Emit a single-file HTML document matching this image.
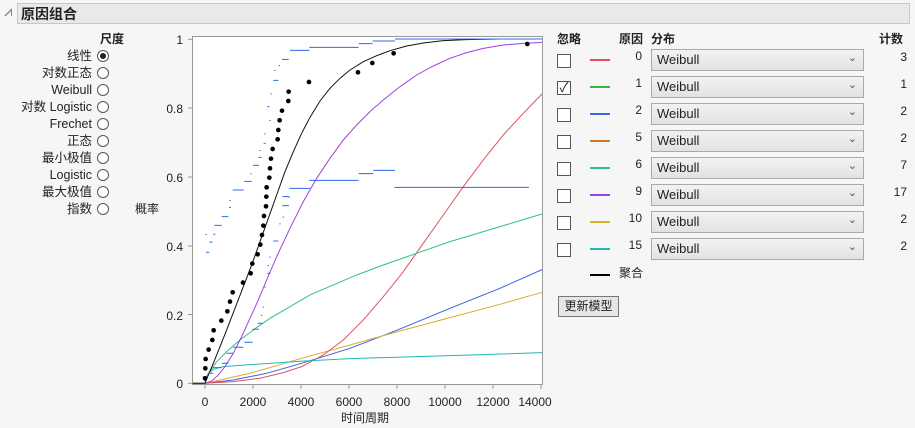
<!DOCTYPE html>
<html><head><meta charset="utf-8"><style>
*{margin:0;padding:0;box-sizing:border-box}
body{width:915px;height:428px;background:#f6f6f6;font-family:"Liberation Sans","Noto Sans CJK SC",sans-serif;font-size:12px;line-height:14px;color:#222;position:relative;overflow:hidden}
.a{position:absolute;white-space:nowrap}
.hdr{left:17px;top:3px;width:893px;height:21px;background:#e9e9e9;border:1px solid #c8c8c8}
.lbl{right:823px;text-align:right;font-size:12.5px;line-height:14px}
.rad{width:12px;height:12px;border:1px solid #555;border-radius:50%;background:#fff;left:97px}
.cb{width:14px;height:14px;border:1px solid #555;background:#fff;left:557px}
.ln{left:590px;width:20px;height:2px}
.num{right:273px;text-align:right}
.dd{left:651px;width:213px;height:22px;border:1px solid #aaa;background:linear-gradient(#f2f2f2,#e2e2e2);font-size:13px;line-height:16px;padding:2px 0 0 5px}
.dd:after{content:"⌄";position:absolute;right:6px;top:0px;font-size:11px;color:#555}
.cnt{right:8px;text-align:right}
</style></head><body>
<div class="a" style="left:4px;top:8px;width:0;height:0;border-left:8px solid transparent;border-bottom:8px solid #888"></div>
<div class="a" style="left:6px;top:11px;width:0;height:0;border-left:5px solid transparent;border-bottom:5px solid #f6f6f6"></div>
<div class="a hdr"></div>
<div class="a" style="left:21px;top:6px;font-size:14px;line-height:17px;font-weight:bold">原因组合</div>
<div class="a" style="left:100px;top:32px;font-weight:bold">尺度</div>
<div class="a lbl" style="top:49px">线性</div><div class="a rad" style="top:50px"><div style="width:6px;height:6px;border-radius:50%;background:#222;margin:2px"></div></div>
<div class="a lbl" style="top:66px">对数正态</div><div class="a rad" style="top:67px"></div>
<div class="a lbl" style="top:83px">Weibull</div><div class="a rad" style="top:84px"></div>
<div class="a lbl" style="top:100px">对数 Logistic</div><div class="a rad" style="top:101px"></div>
<div class="a lbl" style="top:117px">Frechet</div><div class="a rad" style="top:118px"></div>
<div class="a lbl" style="top:134px">正态</div><div class="a rad" style="top:135px"></div>
<div class="a lbl" style="top:151px">最小极值</div><div class="a rad" style="top:152px"></div>
<div class="a lbl" style="top:168px">Logistic</div><div class="a rad" style="top:169px"></div>
<div class="a lbl" style="top:185px">最大极值</div><div class="a rad" style="top:186px"></div>
<div class="a lbl" style="top:202px">指数</div><div class="a rad" style="top:203px"></div>
<div class="a" style="left:135px;top:202px">概率</div>
<svg class="a" style="left:0;top:0" width="915" height="428">
<rect x="192.5" y="36.5" width="350" height="348" fill="#fff" stroke="#999"/>
<g font-size="12" fill="#222" text-anchor="end" font-family="Liberation Sans,sans-serif">
<text x="183" y="44">1</text><text x="183" y="113">0.8</text><text x="183" y="182">0.6</text><text x="183" y="251">0.4</text><text x="183" y="320">0.2</text><text x="183" y="388">0</text></g>
<g stroke="#999"><line x1="188" y1="39.3" x2="192" y2="39.3"/><line x1="188" y1="108" x2="192" y2="108"/><line x1="188" y1="177" x2="192" y2="177"/><line x1="188" y1="246" x2="192" y2="246"/><line x1="188" y1="314.5" x2="192" y2="314.5"/><line x1="188" y1="383.3" x2="192" y2="383.3"/>
<line x1="205" y1="385" x2="205" y2="389"/><line x1="253" y1="385" x2="253" y2="389"/><line x1="301" y1="385" x2="301" y2="389"/><line x1="349" y1="385" x2="349" y2="389"/><line x1="397" y1="385" x2="397" y2="389"/><line x1="445" y1="385" x2="445" y2="389"/><line x1="493" y1="385" x2="493" y2="389"/><line x1="541" y1="385" x2="541" y2="389"/></g>
<g font-size="12" fill="#222" text-anchor="middle" font-family="Liberation Sans,sans-serif">
<text x="205" y="406">0</text><text x="253" y="406">2000</text><text x="301" y="406">4000</text><text x="349" y="406">6000</text><text x="397" y="406">8000</text><text x="445" y="406">10000</text><text x="493" y="406">12000</text><text x="535" y="406">14000</text></g>
<text x="365" y="422" font-size="12" text-anchor="middle" fill="#222" font-family="Liberation Sans,Noto Sans CJK SC,sans-serif">时间周期</text>
<g transform="translate(150,20) scale(0.3333)" fill="none" stroke-width="3">
<polyline stroke="#3a5fe0" points="128,1090 165,1090 250,1080 350,1060 455,1030 600,985 743,930 900,865 1050,805 1176,749"/>
<polyline stroke="#d4ae2a" points="128,1090 165,1090 300,1060 455,1015 600,975 743,935 900,893 1050,853 1176,817"/>
<polyline stroke="#e05060" points="165,1090 250,1085 330,1075 400,1058 455,1040 520,1005 580,960 640,900 700,830 760,755 820,670 880,585 940,500 1000,420 1060,345 1120,280 1176,222"/>
<polyline stroke="#2cc08c" points="165,1085 180,1055 200,1025 230,995 270,960 310,930 360,895 420,860 480,825 550,795 620,765 700,735 800,700 900,665 1000,635 1100,605 1176,582"/>
<polyline stroke="#20b8b8" points="165,1080 175,1060 190,1048 220,1040 300,1034 450,1024 600,1016 800,1010 1000,1004 1176,998"/>
<polyline stroke="#a040e0" points="165,1090 185,1083 205,1065 225,1040 250,1000 275,950 300,895 325,840 350,780 380,710 420,625 460,545 500,475 540,415 580,360 620,315 660,275 700,240 750,200 800,165 850,138 900,115 950,98 1000,85 1060,75 1120,70 1176,67"/>
<polyline stroke="#111" points="128,1090 165,1090 175,1065 190,1030 210,980 230,930 255,865 280,800 305,735 330,665 355,595 380,525 405,455 430,395 455,340 480,292 510,243 540,205 570,175 600,150 640,125 680,107 720,92 770,78 820,69 880,62 950,59 1050,57 1176,57"/>
<g stroke="#2d6be8">
<path d="M168 697h10M178 666h10M190 643h6M193 616h22M215 590h20M237 562h6M248 510h33M283 484h22M309 436h18M325 412h10M341 370h6M352 260h6M370 181h15M396 118h20M420 91h58M478 82h148M626 71h42M668 63h67M735 57h441M418 505h62M478 481h148M626 461h44M670 451h65M733 502h404M397 557h20M397 530h20M370 663h15M352 760h10M175 1060h15M190 1043h25M215 1030h20M230 1000h20M250 982h30M283 967h25M307 928h20M323 910h15"/>
<path d="M168 642v3M240 540v3M303 460v3M330 390v3M345 340v3M360 300v3M363 220v3M375 150v3M388 135v3M390 610v3M400 590v3M418 530v3M360 710v3M355 735v3M345 800v3M340 860v3M335 885v3" stroke-width="4"/>
</g>
<g fill="#000" stroke="none">
<circle cx="165" cy="1075" r="7"/><circle cx="166" cy="1045" r="7"/><circle cx="167" cy="1017" r="7"/><circle cx="176" cy="989" r="7"/><circle cx="187" cy="960" r="7"/><circle cx="191" cy="931" r="7"/><circle cx="214" cy="902" r="7"/><circle cx="232" cy="874" r="7"/><circle cx="240" cy="845" r="7"/><circle cx="248" cy="817" r="7"/><circle cx="279" cy="788" r="7"/><circle cx="302" cy="760" r="7"/><circle cx="307" cy="731" r="7"/><circle cx="323" cy="703" r="7"/><circle cx="331" cy="674" r="7"/><circle cx="336" cy="645" r="7"/><circle cx="340" cy="617" r="7"/><circle cx="342" cy="588" r="7"/><circle cx="348" cy="559" r="7"/><circle cx="349" cy="530" r="7"/><circle cx="350" cy="502" r="7"/><circle cx="358" cy="473" r="7"/><circle cx="360" cy="445" r="7"/><circle cx="363" cy="416" r="7"/><circle cx="368" cy="387" r="7"/><circle cx="383" cy="358" r="7"/><circle cx="385" cy="330" r="7"/><circle cx="389" cy="301" r="7"/><circle cx="396" cy="272" r="7"/><circle cx="415" cy="243" r="7"/><circle cx="416" cy="215" r="7"/><circle cx="477" cy="186" r="7"/><circle cx="624" cy="157" r="7"/><circle cx="667" cy="129" r="7"/><circle cx="731" cy="100" r="7"/><circle cx="1132" cy="72" r="7"/>
</g></g>
</svg>
<div class="a" style="left:557px;top:32px;font-weight:bold">忽略</div>
<div class="a" style="left:619px;top:32px;font-weight:bold">原因</div>
<div class="a" style="left:651px;top:32px;font-weight:bold">分布</div>
<div class="a" style="left:879px;top:32px;font-weight:bold">计数</div>

<div class="a cb" style="top:54px"></div><div class="a ln" style="top:59px;background:#e05060"></div><div class="a num" style="top:49px">0</div><div class="a dd" style="top:49px">Weibull</div><div class="a cnt" style="top:50px">3</div>
<div class="a cb" style="top:81px;font-size:13px;line-height:11px;text-align:center">✓</div><div class="a ln" style="top:86px;background:#30b840"></div><div class="a num" style="top:76px">1</div><div class="a dd" style="top:76px">Weibull</div><div class="a cnt" style="top:77px">1</div>
<div class="a cb" style="top:108px"></div><div class="a ln" style="top:113px;background:#3a6ae0"></div><div class="a num" style="top:103px">2</div><div class="a dd" style="top:103px">Weibull</div><div class="a cnt" style="top:104px">2</div>
<div class="a cb" style="top:135px"></div><div class="a ln" style="top:140px;background:#d07828"></div><div class="a num" style="top:130px">5</div><div class="a dd" style="top:130px">Weibull</div><div class="a cnt" style="top:131px">2</div>
<div class="a cb" style="top:162px"></div><div class="a ln" style="top:167px;background:#2cc08c"></div><div class="a num" style="top:157px">6</div><div class="a dd" style="top:157px">Weibull</div><div class="a cnt" style="top:158px">7</div>
<div class="a cb" style="top:189px"></div><div class="a ln" style="top:194px;background:#a040e0"></div><div class="a num" style="top:184px">9</div><div class="a dd" style="top:184px">Weibull</div><div class="a cnt" style="top:185px">17</div>
<div class="a cb" style="top:216px"></div><div class="a ln" style="top:221px;background:#d4ae2a"></div><div class="a num" style="top:211px">10</div><div class="a dd" style="top:211px">Weibull</div><div class="a cnt" style="top:212px">2</div>
<div class="a cb" style="top:243px"></div><div class="a ln" style="top:248px;background:#20b8b8"></div><div class="a num" style="top:238px">15</div><div class="a dd" style="top:238px">Weibull</div><div class="a cnt" style="top:239px">2</div>
<div class="a ln" style="top:274px;background:#000"></div><div class="a" style="left:619px;top:266px">聚合</div>
<div class="a" style="left:558px;top:296px;width:61px;height:21px;border:1px solid #777;background:#e6e6e6;text-align:center;line-height:19px">更新模型</div>
</body></html>
